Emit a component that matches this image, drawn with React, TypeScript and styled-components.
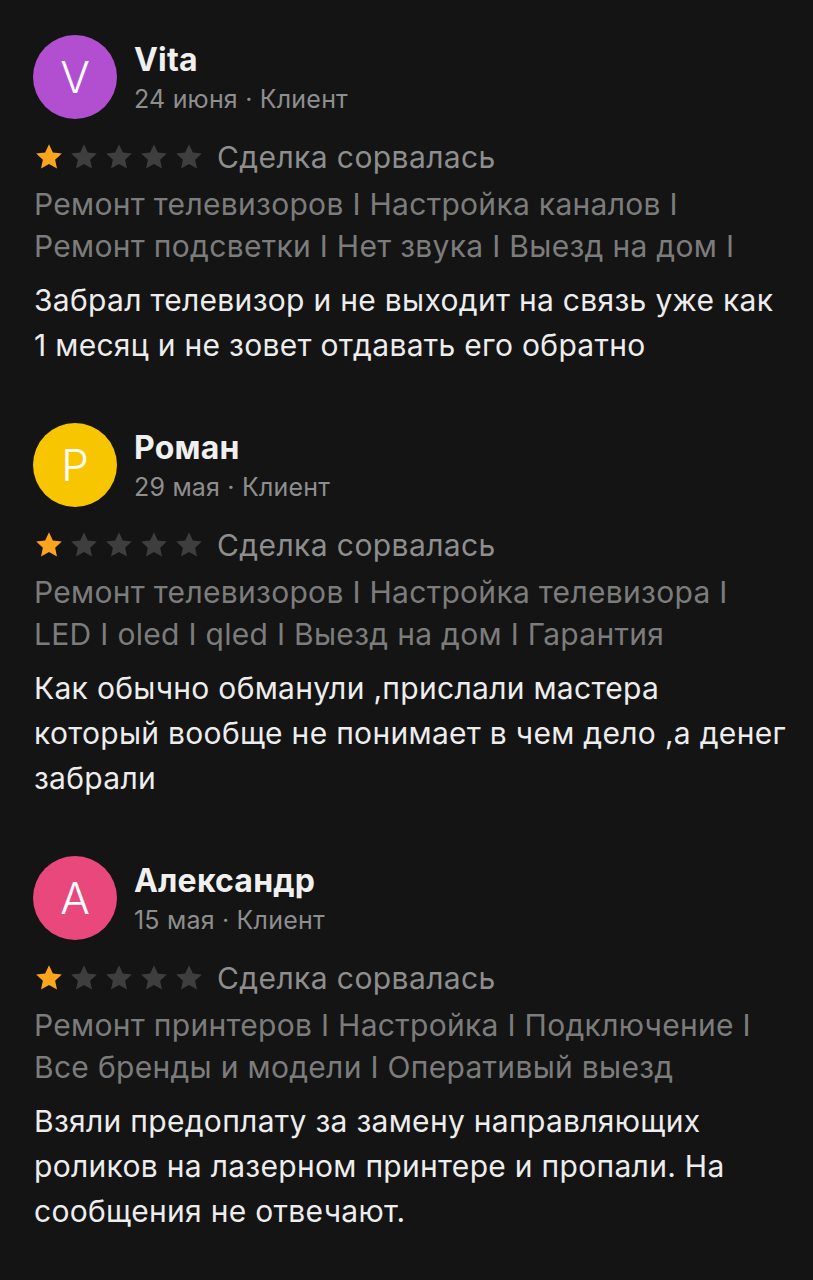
import React from 'react';
import styled, { createGlobalStyle } from 'styled-components';

const GlobalStyle = createGlobalStyle`
  html, body {
    margin: 0;
    padding: 0;
    background: #141414;
  }
  body {
    font-family: Inter, Roboto, "Noto Sans", Arial, sans-serif;
  }
`;

const reviews = [
  {
    letter: 'V',
    color: '#b24fd0',
    name: 'Vita',
    date: '24 июня · Клиент',
    rating: 1,
    status: 'Сделка сорвалась',
    tags: ['Ремонт телевизоров I Настройка каналов I', 'Ремонт подсветки I Нет звука I Выезд на дом I'],
    text: ['Забрал телевизор и не выходит на связь уже как', '1 месяц и не зовет отдавать его обратно'],
  },
  {
    letter: 'P',
    color: '#f7c600',
    name: 'Роман',
    date: '29 мая · Клиент',
    rating: 1,
    status: 'Сделка сорвалась',
    tags: ['Ремонт телевизоров I Настройка телевизора I', 'LED I oled I qled I Выезд на дом I Гарантия'],
    text: [
      'Как обычно обманули ,прислали мастера',
      'который вообще не понимает в чем дело ,а денег',
      'забрали',
    ],
  },
  {
    letter: 'A',
    color: '#e9487c',
    name: 'Александр',
    date: '15 мая · Клиент',
    rating: 1,
    status: 'Сделка сорвалась',
    tags: ['Ремонт принтеров I Настройка I Подключение I', 'Все бренды и модели I Оперативый выезд'],
    text: [
      'Взяли предоплату за замену направляющих',
      'роликов на лазерном принтере и пропали. На',
      'сообщения не отвечают.',
    ],
  },
];

const Star = ({ filled }: { filled: boolean }) => (
  <StarSvg viewBox="0 0 24 24" $filled={filled}>
    <path d="M12 1.8l3.05 6.6 7.2.8-5.35 4.9 1.5 7.1L12 17.6l-6.4 3.6 1.5-7.1L1.75 9.2l7.2-.8z" />
  </StarSvg>
);

export default function App() {
  return (
    <Page>
      <GlobalStyle />
      {reviews.map((r) => (
        <Review key={r.name}>
          <Header>
            <Avatar $bg={r.color}>{r.letter}</Avatar>
            <Who>
              <Name>{r.name}</Name>
              <DateLine>{r.date}</DateLine>
            </Who>
          </Header>
          <RatingRow>
            <Stars>
              {[0, 1, 2, 3, 4].map((i) => (
                <Star key={i} filled={i < r.rating} />
              ))}
            </Stars>
            <Status>{r.status}</Status>
          </RatingRow>
          <Tags>
            {r.tags.map((t) => (
              <Line key={t}>{t}</Line>
            ))}
          </Tags>
          <Body>
            {r.text.map((t) => (
              <Line key={t}>{t}</Line>
            ))}
          </Body>
        </Review>
      ))}
    </Page>
  );
}

const Page = styled.div`
  min-height: 1280px;
  box-sizing: border-box;
  padding: 35px 20px 0 34px;
  background: #141414;
  display: flex;
  flex-direction: column;
  gap: 55px;
`;

const Review = styled.div`
  display: flex;
  flex-direction: column;
`;

const Header = styled.div`
  display: flex;
  align-items: center;
  gap: 17px;
  margin-left: -1px;
`;

const Avatar = styled.div<{ $bg: string }>`
  width: 84px;
  height: 84px;
  border-radius: 50%;
  background: ${(p) => p.$bg};
  color: #fff;
  display: flex;
  align-items: center;
  justify-content: center;
  font-size: 44px;
  font-weight: 300;
  flex-shrink: 0;
`;

const Who = styled.div`
  display: flex;
  flex-direction: column;
  margin-top: 5px;
`;

const Name = styled.div`
  font-size: 32px;
  font-weight: 700;
  line-height: 38px;
  color: #f0f0f0;
  letter-spacing: 0.2px;
`;

const DateLine = styled.div`
  font-size: 25px;
  line-height: 40px;
  color: #8e8e8e;
  letter-spacing: 0.2px;
`;

const RatingRow = styled.div`
  display: flex;
  align-items: center;
  height: 36px;
  margin-top: 20px;
`;

const Stars = styled.div`
  display: flex;
  gap: 5px;
`;

const StarSvg = styled.svg<{ $filled: boolean }>`
  width: 30px;
  height: 30px;
  fill: ${(p) => (p.$filled ? '#fba51f' : '#3e3e3e')};
`;

const Status = styled.div`
  margin-left: 13px;
  font-size: 30px;
  color: #8e8e8e;
  letter-spacing: 0.4px;
`;

const Tags = styled.div`
  margin-top: 8px;
  font-size: 30px;
  line-height: 42px;
  color: #7c7c7c;
  letter-spacing: 0.3px;
`;

const Body = styled.div`
  margin-top: 11px;
  font-size: 30px;
  line-height: 45px;
  color: #ededed;
  letter-spacing: 0.3px;
`;

const Line = styled.div`
  white-space: nowrap;
`;
